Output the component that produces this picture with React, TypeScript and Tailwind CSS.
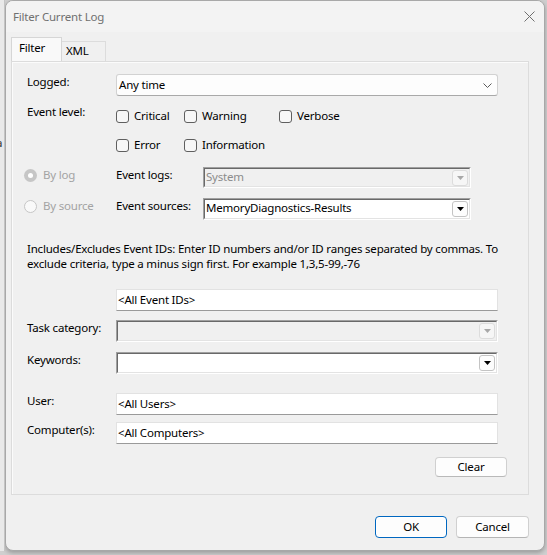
import type { ReactNode } from "react";

function Check({ label, className }: { label: string; className: string }) {
  return (
    <div className={`flex items-center gap-[5px] ${className}`}>
      <span className="h-[13px] w-[13px] rounded-[3px] border border-[#5f5f5f] bg-[#f7f7f7]" />
      <span>{label}</span>
    </div>
  );
}

function Radio({ label, selected }: { label: string; selected?: boolean }) {
  return (
    <div className="flex h-4 w-[92px] items-center gap-[6px] -ml-[3px] text-[#a3a3a3]">
      {selected ? (
        <span className="grid h-[13px] w-[13px] place-items-center rounded-full bg-[#c6c6c6]">
          <span className="h-[5px] w-[5px] rounded-full bg-white" />
        </span>
      ) : (
        <span className="h-[13px] w-[13px] rounded-full border border-[#c6c6c6] bg-[#f9f9f9]" />
      )}
      <span>{label}</span>
    </div>
  );
}

function DropButton({ disabled }: { disabled?: boolean }) {
  return (
    <span
      className={`ml-auto mr-px mt-px grid h-[16px] w-[16px] place-items-center rounded-[3px] border ${
        disabled ? "border-[#dcdcdc] bg-[#f6f6f6]" : "border-[#c4c4c4] bg-[#fdfdfd]"
      }`}
    >
      <svg width="7" height="4" viewBox="0 0 7 4">
        <path d="M0 0h7L3.5 4z" fill={disabled ? "#a8a8a8" : "#000"} />
      </svg>
    </span>
  );
}

function Sunken({
  value,
  disabled,
  className,
}: {
  value?: string;
  disabled?: boolean;
  className: string;
}) {
  return (
    <div
      className={`flex border border-t-[#a0a0a0] border-l-[#a0a0a0] border-b-white border-r-white ${className}`}
    >
      <div
        className={`flex flex-1 items-start border border-t-[#696969] border-l-[#696969] border-b-[#e3e3e3] border-r-[#e3e3e3] ${
          disabled ? "bg-[#f0f0f0] text-[#8c8c8c]" : "bg-white"
        }`}
      >
        <span className="pl-px leading-[16px]">{value}</span>
        <DropButton disabled={disabled} />
      </div>
    </div>
  );
}

function TextBox({ value }: { value: string }) {
  return (
    <div className="flex h-[22px] w-[382px] items-center border border-[#e2e2e2] border-b-[#9a9a9a] bg-white pl-px">
      {value}
    </div>
  );
}

function Row({ label, className, children }: { label: string; className: string; children: ReactNode }) {
  return (
    <div className={`flex items-start ${className}`}>
      <span className="w-[89px] leading-4">{label}</span>
      {children}
    </div>
  );
}

export default function App() {
  return (
    <div className="flex h-[555px] w-[547px] overflow-hidden bg-[#cfcfcf] font-['Noto_Sans',sans-serif] text-[11.5px] tracking-[-0.2px] text-black">
      <div className="relative h-[551px] w-[5px] overflow-hidden border-r border-[#c4c4c4] bg-[#e9e9e9]">
        <span className="absolute left-[-4px] top-[134px] text-[#333]">a</span>
      </div>

      <div className="flex h-[551px] w-[540px] flex-col overflow-hidden rounded-[8px] border border-[#a8a8a8] bg-[#f0f0f0] shadow-[0_2px_4px_rgba(0,0,0,0.25)]">
        <div className="flex h-[31px] items-center justify-between bg-[#f3f3f3] pl-[7px] pr-[8px]">
          <span className="text-[#707070]">Filter Current Log</span>
          <svg width="11" height="11" viewBox="0 0 11 11" className="mr-[1px]">
            <path d="M0.5 0.5l10 10M10.5 0.5l-10 10" stroke="#6f6f6f" strokeWidth="1" />
          </svg>
        </div>

        <div className="flex flex-1 flex-col pl-[5px] pr-[15px]">
          <div className="mt-[6px] flex h-[23px] items-end">
            <div className="relative z-10 h-[24px] w-[51px] border border-b-0 border-[#d6d6d6] bg-[#f9f9f9] pl-[7px] leading-[20px]">
              Filter
            </div>
            <div className="h-[20px] w-[44px] border border-l-0 border-b-0 border-[#dcdcdc] bg-[#f0f0f0] pl-[4px] leading-[18px]">
              XML
            </div>
          </div>

          <div className="flex h-[434px] flex-col border border-[#dcdcdc] pl-[15px] shadow-[inset_1px_1px_0_#fbfbfb]">
            <Row label="Logged:" className="mt-[12px]">
              <div className="flex h-[22px] w-[382px] items-center justify-between rounded-[3px] border border-[#d2d2d2] border-b-[#a9a9a9] bg-[#fdfdfd] pl-[2px] pr-[5px]">
                <span>Any time</span>
                <svg width="9" height="5" viewBox="0 0 9 5">
                  <path d="M0.5 0.5l4 4 4-4" fill="none" stroke="#5a5a5a" strokeWidth="1" />
                </svg>
              </div>
            </Row>

            <div className="mt-[8px] flex items-start">
              <span className="w-[89px] leading-4">Event level:</span>
              <div className="flex flex-col gap-[5px]">
                <div className="flex h-6 items-center">
                  <Check label="Critical" className="w-[68px]" />
                  <Check label="Warning" className="w-[95px]" />
                  <Check label="Verbose" className="w-[90px]" />
                </div>
                <div className="flex h-6 items-center">
                  <Check label="Error" className="w-[68px]" />
                  <Check label="Information" className="w-[95px]" />
                </div>
              </div>
            </div>

            <div className="mt-[10px] flex items-start">
              <Radio label="By log" selected />
              <span className="w-[87px] leading-4">Event logs:</span>
              <Sunken value="System" disabled className="h-[21px] w-[268px]" />
            </div>

            <div className="mt-[10px] flex items-start">
              <Radio label="By source" />
              <span className="w-[87px] leading-4">Event sources:</span>
              <Sunken value="MemoryDiagnostics-Results" className="h-[22px] w-[268px]" />
            </div>

            <p className="mt-[21px] leading-[15px]">
              <span className="block whitespace-nowrap">
                Includes/Excludes Event IDs: Enter ID numbers and/or ID ranges separated by commas. To
              </span>
              <span className="block whitespace-nowrap">
                exclude criteria, type a minus sign first. For example 1,3,5-99,-76
              </span>
            </p>

            <div className="mt-[18px] pl-[89px]">
              <TextBox value="<All Event IDs>" />
            </div>

            <Row label="Task category:" className="mt-[9px]">
              <Sunken disabled className="h-[22px] w-[382px]" />
            </Row>

            <Row label="Keywords:" className="mt-[10px]">
              <Sunken className="h-[22px] w-[382px]" />
            </Row>

            <Row label="User:" className="mt-[19px]">
              <TextBox value="<All Users>" />
            </Row>

            <Row label="Computer(s):" className="mt-[7px]">
              <TextBox value="<All Computers>" />
            </Row>

            <div className="mt-[13px] pl-[408px]">
              <button className="h-[20px] w-[72px] rounded-[4px] border border-[#d0d0d0] border-b-[#b9b9b9] bg-[#fdfdfd]">
                Clear
              </button>
            </div>
          </div>

          <div className="mt-[21px] flex justify-end gap-[9px]">
            <button className="h-[22px] w-[72px] rounded-[4px] border border-[#0067c0] bg-[#fdfdfd] shadow-[inset_0_0_0_1px_#fff]">
              OK
            </button>
            <button className="h-[22px] w-[73px] rounded-[4px] border border-[#d0d0d0] border-b-[#b5b5b5] bg-[#fdfdfd]">
              Cancel
            </button>
          </div>
        </div>
      </div>
    </div>
  );
}
